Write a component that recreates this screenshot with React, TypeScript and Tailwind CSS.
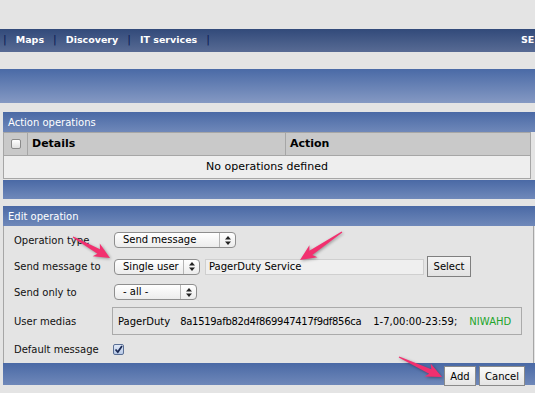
import React from "react";

const font = { fontFamily: '"DejaVu Sans", Verdana, sans-serif' };

function Arrow({ x1, y1, x2, y2 }: { x1: number; y1: number; x2: number; y2: number }) {
  const dx = x2 - x1;
  const dy = y2 - y1;
  const L = Math.sqrt(dx * dx + dy * dy);
  const a = (Math.atan2(dy, dx) * 180) / Math.PI;
  const pts = `0,-0.6 ${L - 13},-2.6 ${L - 16},-7.5 ${L},0 ${L - 16},7 ${L - 13},2.6 0,0.6`;
  return (
    <g transform={`translate(${x1} ${y1}) rotate(${a})`}>
      <polygon points={pts} fill="#f2306f" />
    </g>
  );
}

function UpDown() {
  return (
    <svg width="6" height="9" viewBox="0 0 6 9">
      <polygon points="3,0 6,3.5 0,3.5" fill="#222" />
      <polygon points="3,9 6,5.5 0,5.5" fill="#222" />
    </svg>
  );
}

function Select({ label, width }: { label: string; width: string }) {
  return (
    <div
      className={`${width} h-[16px] flex items-stretch rounded-[4px] border border-[#8e8e8e] bg-gradient-to-b from-[#ffffff] to-[#ececec] text-[10px] text-black`}
    >
      <div className="flex-1 flex items-center pl-[8px] leading-none whitespace-nowrap">{label}</div>
      <div className="w-[16px] border-l border-[#b5b5b5] flex items-center justify-center">
        <UpDown />
      </div>
    </div>
  );
}

function Label({ children }: { children: React.ReactNode }) {
  return <div className="w-[99px] pl-[10px] text-[10px] text-[#111] whitespace-nowrap">{children}</div>;
}

export default function App() {
  return (
    <div className="relative w-[535px] h-[393px] overflow-hidden bg-[#e4e4e4]" style={font}>
      {/* top nav */}
      <div className="mt-[29px] h-[23px] flex items-center bg-gradient-to-b from-[#324a7a] to-[#586b94] text-[9.5px] font-bold text-white">
        <div className="flex items-center gap-[9px] pl-[3px] whitespace-nowrap">
          <span className="text-[#0c1a55] font-normal text-[11px]">|</span>
          <span>Maps</span>
          <span className="text-[#0c1a55] font-normal text-[11px]">|</span>
          <span>Discovery</span>
          <span className="text-[#0c1a55] font-normal text-[11px]">|</span>
          <span>IT services</span>
          <span className="text-[#0c1a55] font-normal text-[11px]">|</span>
        </div>
        <div className="flex-1" />
        <div className="w-[14px] overflow-hidden whitespace-nowrap">SE</div>
      </div>

      {/* band */}
      <div className="mt-[17px] h-[34px] bg-gradient-to-b from-[#4a6aa6] to-[#8599c3]" />

      {/* Action operations */}
      <div className="mt-[9px] ml-[3px]">
        <div className="h-[20px] flex items-center pl-[5px] bg-gradient-to-b from-[#4a69a5] to-[#6f88b9] text-[10px] text-white">
          Action operations
        </div>
        <div className="mr-[4px] border border-[#a6a6a6] border-t-0">
          <div className="h-[24px] flex bg-[#c9c9c9] border-t border-[#a6a6a6] border-b text-[11px] font-bold text-black">
            <div className="w-[24px] border-r border-[#a6a6a6] flex items-center justify-center">
              <div className="w-[10px] h-[10px] rounded-[2px] border border-[#8a8a8a] bg-gradient-to-b from-white to-[#e0e0e0]" />
            </div>
            <div className="w-[258px] border-r border-[#a6a6a6] flex items-center pl-[4px]">Details</div>
            <div className="flex-1 flex items-center pl-[4px]">Action</div>
          </div>
          <div className="h-[22px] flex items-center justify-center bg-[#eeeeee] text-[11px] text-black">
            No operations defined
          </div>
        </div>
        <div className="mt-[1px] h-[19px] bg-gradient-to-b from-[#4a69a5] to-[#7089ba]" />
      </div>

      {/* Edit operation */}
      <div className="mt-[7px] ml-[3px]">
        <div className="h-[20px] flex items-center pl-[5px] bg-gradient-to-b from-[#4a69a5] to-[#6f88b9] text-[10px] text-white">
          Edit operation
        </div>
        <div className="h-[137px] mr-[1px] border-l border-r border-[#a6a6a6] pt-[6px] flex flex-col">
          <div className="h-[16px] flex items-center">
            <Label>Operation type</Label>
            <div className="ml-[11px]">
              <Select label="Send message" width="w-[122px]" />
            </div>
          </div>
          <div className="mt-[8px] h-[21px] flex items-center">
            <Label>Send message to</Label>
            <div className="ml-[11px] flex items-center">
              <Select label="Single user" width="w-[86px]" />
              <div className="ml-[5px] w-[219px] h-[16px] border border-[#cfcfcf] bg-[#efefef] flex items-center pl-[3px] text-[10px] text-black">
                PagerDuty Service
              </div>
              <div className="ml-[3px] w-[44px] h-[21px] border border-[#7f7f7f] bg-gradient-to-b from-[#f4f4f4] to-[#e2e2e2] flex items-center justify-center text-[10px] text-black">
                Select
              </div>
            </div>
          </div>
          <div className="mt-[7px] h-[16px] flex items-center">
            <Label>Send only to</Label>
            <div className="ml-[11px]">
              <Select label="- all -" width="w-[83px]" />
            </div>
          </div>
          <div className="mt-[7px] h-[28px] flex items-center">
            <Label>User medias</Label>
            <div className="ml-[9px] w-[410px] h-[28px] border border-[#aaaaaa] flex items-center pl-[5px] text-[10px] text-black whitespace-nowrap">
              <span>PagerDuty</span>
              <span className="ml-[10px] tracking-[-0.3px]">8a1519afb82d4f869947417f9df856ca</span>
              <span className="ml-[12px]">1-7,00:00-23:59;</span>
              <span className="ml-[12px] text-[#22a52a]">NIWAHD</span>
            </div>
          </div>
          <div className="mt-[7px] h-[14px] flex items-center">
            <Label>Default message</Label>
            <div className="ml-[10px] w-[11px] h-[11px] rounded-[2px] border border-[#5a6f95] bg-gradient-to-b from-[#dfe8f6] to-[#b7c8e6] flex items-center justify-center">
              <svg width="9" height="9" viewBox="0 0 9 9">
                <path d="M1.5 4.5 L3.8 7 L8 1" fill="none" stroke="#1b2a55" strokeWidth="1.8" />
              </svg>
            </div>
          </div>
        </div>
        <div className="h-[22px] flex items-end justify-end pr-[10px] bg-gradient-to-b from-[#4a69a5] to-[#6f88b9]">
          <div className="flex gap-[3px] mb-[-1px]">
            <div className="w-[32px] h-[20px] border border-[#8a8a8a] bg-gradient-to-b from-[#fafafa] to-[#e4e4e4] flex items-center justify-center text-[10px] text-black">
              Add
            </div>
            <div className="w-[46px] h-[20px] border border-[#8a8a8a] bg-gradient-to-b from-[#fafafa] to-[#e4e4e4] flex items-center justify-center text-[10px] text-black">
              Cancel
            </div>
          </div>
        </div>
      </div>

      {/* annotation arrows */}
      <svg
        className="absolute left-0 top-0 pointer-events-none"
        width="535"
        height="393"
        style={{ filter: "drop-shadow(1px 1px 1.5px rgba(0,0,0,0.35))" }}
      >
        <Arrow x1={73} y1={237} x2={110} y2={258} />
        <Arrow x1={342} y1={232} x2={300} y2={260} />
        <Arrow x1={399} y1={357} x2={442} y2={377} />
      </svg>
    </div>
  );
}
